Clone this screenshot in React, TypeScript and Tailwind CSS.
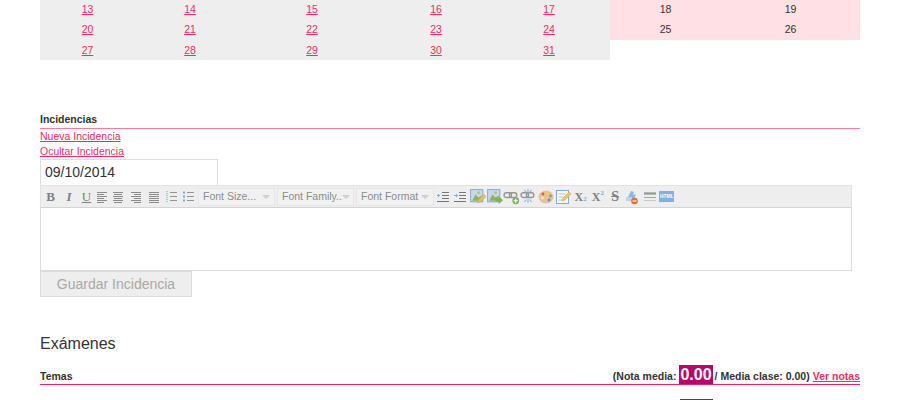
import type { ReactNode } from "react";

const rows = [
  [13, 14, 15, 16, 17, 18, 19],
  [20, 21, 22, 23, 24, 25, 26],
  [27, 28, 29, 30, 31],
];

function Slot({ className = "w-[17.25px]", children }: { className?: string; children: ReactNode }) {
  return <div className={`${className} h-[16px] shrink-0 flex items-center justify-center`}>{children}</div>;
}

function Lines({ rows }: { rows: [number, number][] }) {
  return (
    <svg width="12" height="12" viewBox="0 0 12 12" stroke="#8a8a8a" strokeWidth="1">
      {rows.map(([x, w], i) => (
        <path key={i} d={`M${x} ${1.5 + i * 2}h${w}`} />
      ))}
    </svg>
  );
}

function ListIcon({ ordered }: { ordered?: boolean }) {
  return (
    <svg width="13" height="13" viewBox="0 0 13 13">
      <path d="M5 2.5h7M5 6.5h7M5 10.5h7" stroke="#949494" />
      {ordered ? (
        <path d="M1 1.5h2M1 3.5h2M1 5.5h2M1 7.5h2M1 9.5h2M1 11.5h2" stroke="#a8c4e8" />
      ) : (
        <path d="M1 2.5h2M1 6.5h2M1 10.5h2" stroke="#7aa8e0" strokeWidth="2" />
      )}
    </svg>
  );
}

function IndentIcon({ flip }: { flip?: boolean }) {
  return (
    <svg width="14" height="14" viewBox="0 0 14 14">
      <path d="M6 2.5h7M6 5.5h7M6 8.5h7M1 11.5h12" stroke="#777777" />
      <path d="M1 5.5h3" stroke="#7aaee0" />
      <path d={flip ? "M1 5.5l2-2v4z" : "M5 5.5l-2-2v4z"} fill="#7aaee0" />
    </svg>
  );
}

function Picture({ tail }: { tail: ReactNode }) {
  return (
    <svg width="17" height="17" viewBox="0 0 16 16">
      <rect x="1.5" y="1.5" width="11.5" height="11.5" fill="#c8d8ea" stroke="#8facd0" />
      <path d="M3 12l3-6 3 3 3-2v5z" fill="#8ab45e" />
      <circle cx="9" cy="4.5" r="1.4" fill="#a8c878" />
      {tail}
    </svg>
  );
}

function Chain({ extra }: { extra: ReactNode }) {
  return (
    <svg width="17" height="17" viewBox="0 0 16 16" fill="none">
      <rect x="1" y="4.5" width="7" height="4.5" rx="2.2" stroke="#969696" strokeWidth="1.3" />
      <rect x="6" y="4.5" width="7" height="4.5" rx="2.2" stroke="#969696" strokeWidth="1.3" />
      {extra}
    </svg>
  );
}

function Select({ label, width }: { label: string; width: string }) {
  return (
    <div className={`${width} h-[18px] shrink-0 flex items-center justify-between pl-[4px] pr-[4px] pt-[1px] border border-[#e6e6e6] bg-[#f1f1f1] text-[10.5px] text-[#8c8c8c]`}>
      <span className="whitespace-nowrap">{label}</span>
      <span className="w-0 h-0 border-x-[4px] border-x-transparent border-t-[4px] border-t-[#cfcfcf]" />
    </div>
  );
}

export default function App() {
  return (
    <div className="w-[900px] h-[400px] overflow-hidden bg-white font-['Liberation_Sans',Arial,sans-serif] text-[#333]">
      <div className="mx-[40px] w-[820px]">
        {/* calendario */}
        <div className="-mt-[1px] grid grid-cols-[95px_110px_134px_114px_117px_111px_139px] text-[10.5px] text-center">
          {rows.map((row, r) =>
            row.map((d, i) => (
              <div
                key={d}
                className={`${r === 0 ? "h-[20px] leading-[20px]" : r === 1 ? "h-[21px] leading-[21px]" : "h-[20px] leading-[21px]"} ${i >= 5 ? "bg-[#ffe0e5] text-[#333]" : "bg-[#eeeeee]"} ${i === 4 ? "pr-[5px]" : ""}`}
              >
                {i < 5 ? <a className="text-[#ff2a5f] underline">{d}</a> : d}
              </div>
            ))
          )}
        </div>

        {/* incidencias */}
        <div className="mt-[53px] h-[16px] border-b border-[#ff7a9a] text-[10.5px] leading-[13px] font-bold">Incidencias</div>
        <div className="text-[10.5px] leading-[15px]">
          <a className="block text-[#ff2a5f] underline">Nueva Incidencia</a>
          <a className="block text-[#ff2a5f] underline">Ocultar Incidencia</a>
        </div>
        <div className="w-[178px] h-[26px] border border-b-0 border-[#dedede] pl-[4px] text-[14px] leading-[24px] text-[#333]">09/10/2014</div>

        <div className="w-[812px]">
          <div className="h-[23px] flex items-center bg-[#eeeeee] border border-[#e2e2e2] border-b-[#d4d4d4]">
            <Slot className="w-[19px] text-[13px] font-bold font-['Liberation_Serif',serif] text-[#808080]">B</Slot>
            <Slot className="w-[18px] text-[13px] font-bold italic font-['Liberation_Serif',serif] text-[#808080]">I</Slot>
            <Slot className="w-[17px] text-[13px] underline font-['Liberation_Serif',serif] text-[#808080]">U</Slot>
            <Slot className="w-[14px]"><Lines rows={[[1, 10], [1, 7], [1, 10], [1, 7], [1, 10], [1, 7]]} /></Slot>
            <Slot className="w-[18px]"><Lines rows={[[1, 10], [2, 8], [1, 10], [2, 8], [1, 10], [2, 8]]} /></Slot>
            <Slot className="w-[18px]"><Lines rows={[[1, 10], [4, 7], [1, 10], [4, 7], [1, 10], [4, 7]]} /></Slot>
            <Slot className="w-[17px]"><Lines rows={[[1, 10], [1, 10], [1, 10], [1, 10], [1, 10], [1, 10]]} /></Slot>
            <Slot className="w-[18px]"><ListIcon ordered /></Slot>
            <Slot className="w-[16px]"><ListIcon /></Slot>
            <div className="w-[2px] shrink-0" />
            <Select label="Font Size..." width="w-[77px]" />
            <div className="w-[2px] shrink-0" />
            <Select label="Font Family.." width="w-[77px]" />
            <div className="w-[2px] shrink-0" />
            <Select label="Font Format" width="w-[78px]" />
            <Slot><IndentIcon flip /></Slot>
            <Slot><IndentIcon /></Slot>
            <Slot>
              <Picture tail={<path d="M8 14l1-3 5-5 2 2-5 5z" fill="#e6c06c" stroke="#c99a3e" strokeWidth=".5" />} />
            </Slot>
            <Slot>
              <Picture tail={<path d="M9 10h3V8l4 3.5-4 3.5v-2H9z" fill="#7ab455" />} />
            </Slot>
            <Slot>
              <Chain extra={<><circle cx="12" cy="12" r="3.2" fill="#7ab455" /><path d="M10 12h4M12 10v4" stroke="#fff" /></>} />
            </Slot>
            <Slot>
              <Chain extra={<path d="M7.5 1v3M7.5 10v4M4 2l2 2M11 2L9 4M4 13l2-2M11 13l-2-2" stroke="#8ab6e6" />} />
            </Slot>
            <Slot>
              <svg width="16" height="16" viewBox="0 0 16 16">
                <ellipse cx="8" cy="8" rx="7.5" ry="6.5" fill="#e8c296" />
                <circle cx="5" cy="5" r="1.4" fill="#e0584f" />
                <circle cx="9" cy="4" r="1.4" fill="#f0d040" />
                <circle cx="12.5" cy="7" r="1.4" fill="#74b05a" />
                <circle cx="11" cy="11" r="1.4" fill="#5b8fd8" />
                <circle cx="4.5" cy="9" r="1.4" fill="#f4ece0" />
              </svg>
            </Slot>
            <Slot>
              <svg width="16" height="16" viewBox="0 0 16 16">
                <rect x="1.5" y="1.5" width="12" height="13" fill="#f4f8fc" stroke="#7fabda" />
                <path d="M3.5 5h7M3.5 8h5M3.5 11h4" stroke="#b5c6da" />
                <path d="M7 12l1-3 6-6 2 2-6 6z" fill="#ecc95c" stroke="#c9a53e" strokeWidth=".5" />
              </svg>
            </Slot>
            <Slot className="w-[17.25px] text-[12px] font-bold font-['Liberation_Serif',serif] text-[#808080]">
              X<span className="text-[7px] text-[#7fa8dc] relative top-[3px]">2</span>
            </Slot>
            <Slot className="w-[17.25px] text-[12px] font-bold font-['Liberation_Serif',serif] text-[#808080]">
              X<span className="text-[7px] text-[#7fa8dc] relative -top-[3px]">2</span>
            </Slot>
            <Slot className="w-[17.25px] text-[14px] font-bold line-through font-['Liberation_Serif',serif] text-[#808080]">S</Slot>
            <Slot>
              <svg width="16" height="16" viewBox="0 0 16 16">
                <path d="M3 10l4-8 3 1-1 3 3-1-2 6z" fill="#8db7e6" />
                <path d="M2 8h6v4H2z" fill="#bcd3ee" />
                <circle cx="10.5" cy="12" r="3.3" fill="#e0703c" />
                <path d="M8.5 12h4" stroke="#fff" />
              </svg>
            </Slot>
            <Slot>
              <svg width="14" height="14" viewBox="0 0 14 14">
                <path d="M1 3h12M1 4h12" stroke="#7d7d7d" />
                <path d="M1 7.5h12" stroke="#8aaad4" />
                <path d="M1 10.5h12" stroke="#c9c9c9" />
              </svg>
            </Slot>
            <Slot>
              <span className="w-[15px] h-[11px] bg-[#86aee0] text-[5px] leading-[11px] font-bold text-white text-center">HTML</span>
            </Slot>
          </div>
          <div className="h-[63px] border border-t-0 border-[#dcdcdc]" />
        </div>

        <button className="block w-[152px] h-[26px] bg-[#eeeeee] border border-[#dcdcdc] text-[14px] text-[#a9a9a9]">Guardar Incidencia</button>

        {/* examenes */}
        <div className="mt-[37px] text-[16px] leading-[20px] text-[#333]">Exámenes</div>

        <div className="mt-[11px] h-[20px] flex items-end justify-between border-b border-[#f01e5a] text-[10.5px] font-bold">
          <span className="leading-[14px] mb-[1px]">Temas</span>
          <div className="flex items-end">
            <span className="leading-[14px] mb-[1px] mr-[3px]">(Nota media:</span>
            <span className="bg-[#b5076b] text-white text-[16px] leading-[19px] px-px">0.00</span>
            <span className="leading-[14px] mb-[1px] ml-[2px] mr-[3px]">/ Media clase: 0.00)</span>
            <a className="leading-[14px] mb-[1px] text-[#ff2a5f] underline">Ver notas</a>
          </div>
        </div>
        <div className="mt-[14px] flex justify-end pr-[147px]">
          <div className="w-[33px] h-[2px] bg-[#b5076b]" />
        </div>
      </div>
    </div>
  );
}
